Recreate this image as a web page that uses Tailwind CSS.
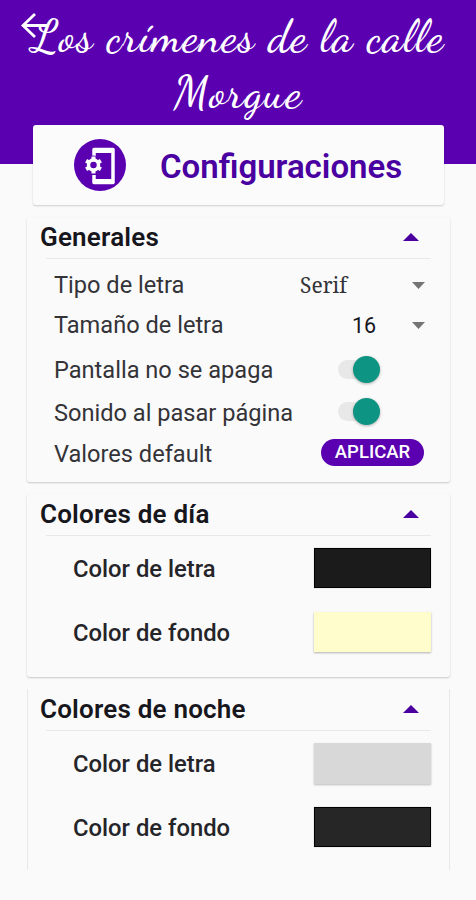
<!DOCTYPE html>
<html lang="es">
<head>
<meta charset="utf-8">
<title>Configuraciones</title>
<script src="https://cdn.jsdelivr.net/npm/@tailwindcss/browser@4"></script>
</head>
<body class="w-[476px] h-[900px] overflow-hidden bg-[#fafafa] font-['Roboto',sans-serif] text-[#16161c]">
<header class="relative h-[164px] bg-[#5a00b0] text-white">
  <svg class="absolute left-[20px] top-[12px]" width="28" height="28" viewBox="0 0 28 28" fill="none" stroke="#fff" stroke-width="2.8"><path d="M15 2L3 13.500L15 25M3 13.500H28"/></svg>
  <h1 class="pt-[9px] text-center font-['Dancing_Script',cursive] text-[46px] font-medium leading-[56px] whitespace-nowrap"><span class="block tracking-[1px]">Los crímenes de la calle</span><span class="block tracking-[1.300px]">Morgue</span></h1>
</header>
<main>
  <section class="relative -mt-[39px] ml-[33px] flex h-[80px] w-[411px] items-center rounded-[3px] bg-[#fbfbfb] pl-[41px] shadow-[0_1px_2px_rgba(0,0,0,0.18)]">
    <svg width="52" height="52" viewBox="0 0 52 52"><circle cx="26" cy="26" r="26" fill="#5a00b0"/>
      <path d="M20 17V10.500H39V43.500H20V36" fill="none" stroke="#fff" stroke-width="3.500" stroke-linejoin="round"/><path d="M19 11.500H40M19 42.500H40" stroke="#fff" stroke-width="5"/>
      <g transform="translate(19.500 26)"><circle r="9.500" fill="#5a00b0"/><circle r="5" fill="none" stroke="#fff" stroke-width="3.500"/><path d="M0-8.500V-5M0 8.500V5M-7.400-4.250L-4.300-2.500M7.400-4.250L4.300-2.500M-7.400 4.250L-4.300 2.500M7.400 4.250L4.300 2.500" stroke="#fff" stroke-width="4"/></g></svg>
    <h2 class="ml-[34px] mt-[3px] whitespace-nowrap text-[33px] font-semibold leading-[40px] text-[#4a00a0]">Configuraciones</h2>
  </section>

  <section class="ml-[27px] mt-[12px] h-[265px] w-[423px] rounded-[3px] pl-[13px] pr-[19px] shadow-[0_1px_2px_rgba(0,0,0,0.2)]">
    <div class="flex h-[41px] items-center justify-between pr-[12px]"><h3 class="text-[26px] font-semibold tracking-[0.2px]">Generales</h3><svg class="-mt-[2px]" width="16" height="8"><path d="M0 8L8 0L16 8Z" fill="#4a00a0"/></svg></div>
    <div class="ml-[6px] h-px bg-[#e8e8e8]"></div>
    <div class="flex flex-col pl-[14px] text-[23.600px] text-[#333338]">
      <div class="mt-[7px] flex h-[40px] items-center"><span class="w-[246px]">Tipo de letra</span><span class="w-[112px] font-['Noto_Serif','DejaVu_Serif',serif] text-[21px]">Serif</span><svg class="-mt-[2px]" width="13" height="7"><path d="M0 0H13L6.500 7Z" fill="#757575"/></svg></div>
      <div class="flex h-[40px] items-center"><span class="w-[298px]">Tamaño de letra</span><span class="w-[60px] text-[21.500px] text-[#16161c]">16</span><svg class="-mt-[2px]" width="13" height="7"><path d="M0 0H13L6.500 7Z" fill="#757575"/></svg></div>
      <div class="mt-[4px] flex h-[42px] items-center"><span class="w-[284px]">Pantalla no se apaga</span><span class="-mt-[4px] flex h-[19px] w-[42px] items-center justify-end rounded-full bg-[#e8e8e8]"><i class="size-[27px] shrink-0 rounded-full bg-[#0d9482] shadow-[0_1px_3px_rgba(0,0,0,0.3)]"></i></span></div>
      <div class="flex h-[42px] items-center"><span class="w-[284px] pt-[2px]">Sonido al pasar página</span><span class="-mt-[4px] flex h-[19px] w-[42px] items-center justify-end rounded-full bg-[#e8e8e8]"><i class="size-[27px] shrink-0 rounded-full bg-[#0d9482] shadow-[0_1px_3px_rgba(0,0,0,0.3)]"></i></span></div>
      <div class="flex h-[40px] items-center"><span class="w-[267px] pt-[2px]">Valores default</span><span class="-mt-[4px] flex h-[27px] w-[103px] items-center justify-center rounded-full bg-[#5a00b0] pt-[2px] text-[18.500px] font-medium text-white">APLICAR</span></div>
    </div>
  </section>

  <section class="ml-[27px] mt-[12px] h-[183px] w-[423px] rounded-[3px] pl-[13px] pr-[19px] shadow-[0_1px_2px_rgba(0,0,0,0.2)]">
    <div class="flex h-[41px] items-center justify-between pr-[12px]"><h3 class="text-[26px] font-semibold tracking-[0.2px]">Colores de día</h3><svg class="-mt-[2px]" width="16" height="8"><path d="M0 8L8 0L16 8Z" fill="#4a00a0"/></svg></div>
    <div class="ml-[6px] h-px bg-[#e8e8e8]"></div>
    <div class="flex flex-col pl-[33px] text-[23.800px] font-medium text-[#242429]">
      <div class="mt-[2px] flex h-[64px] items-center justify-between"><span>Color de letra</span><i class="-mt-[4px] h-[40px] w-[117px] border border-black bg-[#1b1b1b] shadow-[0_0_1px_rgba(0,0,0,0.3)]"></i></div>
      <div class="flex h-[64px] items-center justify-between"><span>Color de fondo</span><i class="-mt-[4px] h-[40px] w-[117px] bg-[#fefdcb] shadow-[0_1px_2px_rgba(0,0,0,0.3)]"></i></div>
    </div>
  </section>

  <section class="ml-[27px] mt-[12px] h-[181px] w-[423px] border-x border-[#e8e8e8] pl-[12px] pr-[18px]">
    <div class="flex h-[41px] items-center justify-between pr-[12px]"><h3 class="text-[26px] font-semibold tracking-[0.2px]">Colores de noche</h3><svg class="-mt-[2px]" width="16" height="8"><path d="M0 8L8 0L16 8Z" fill="#4a00a0"/></svg></div>
    <div class="ml-[6px] h-px bg-[#e8e8e8]"></div>
    <div class="flex flex-col pl-[33px] text-[23.800px] font-medium text-[#242429]">
      <div class="mt-[2px] flex h-[64px] items-center justify-between"><span>Color de letra</span><i class="-mt-[4px] h-[41px] w-[117px] bg-[#d8d8d8] shadow-[0_1px_2px_rgba(0,0,0,0.25)]"></i></div>
      <div class="flex h-[64px] items-center justify-between"><span>Color de fondo</span><i class="-mt-[4px] h-[40px] w-[117px] border border-black bg-[#262626] shadow-[0_0_1px_rgba(0,0,0,0.3)]"></i></div>
    </div>
  </section>
</main>
</body>
</html>
